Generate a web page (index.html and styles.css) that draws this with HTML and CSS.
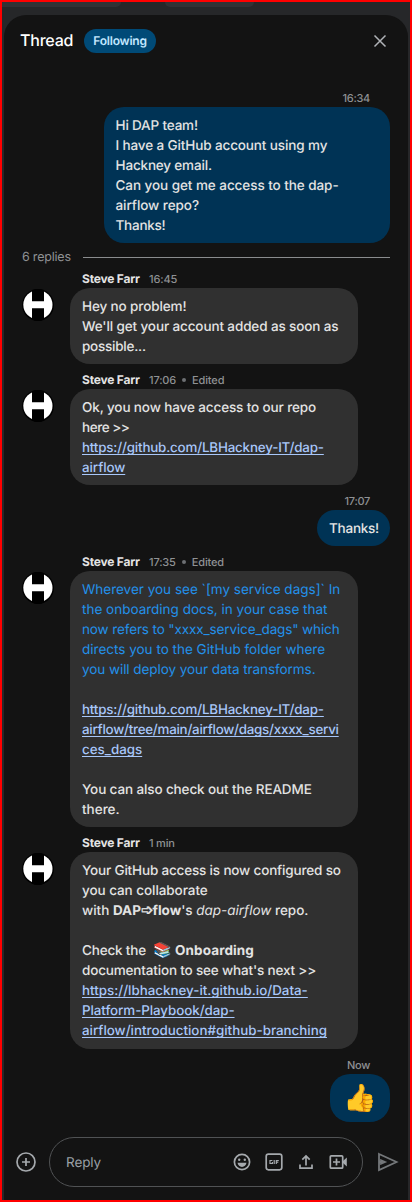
FILE: index.html
```html
<!DOCTYPE html>
<html lang="en">
<head>
<meta charset="utf-8">
<title>Thread</title>
<link rel="stylesheet" href="styles.css">
</head>
<body>
<svg class="defs" aria-hidden="true">
  <symbol id="avatar" viewBox="0 0 32 32">
    <circle cx="16" cy="16" r="16" fill="#000"/>
    <circle cx="15.900" cy="15.800" r="14.600" fill="#fff"/>
    <path fill="#000" d="M10 1Q16-1 22 1V12.200H10zM10 19.200h12v11.300q-6 2.500-12 0z"/>
  </symbol>
</svg>
<div class="frame">
  <div class="backdrop"><i class="chip chip-a"></i><i class="chip chip-b"></i></div>
  <main class="panel">
    <header class="head">
      <h1 class="title">Thread</h1>
      <span class="following">Following</span>
      <svg class="close" viewBox="0 0 14 14"><path d="M1.500 1.500l11 11M12.500 1.500l-11 11"/></svg>
    </header>

    <section class="thread">
      <article class="mine">
        <div class="meta mine-meta">16:34</div>
        <div class="bubble blue wide">
          <span class="ln t3">Hi DAP team!</span>
          <span class="ln t2">I have a GitHub account using my</span>
          <span class="ln t3">Hackney email.</span>
          <span class="ln t1">Can you get me access to the dap-</span>
          <span class="ln t1">airflow repo?</span>
          <span class="ln t4">Thanks!</span>
        </div>
      </article>

      <div class="replies"><span>6 replies</span><hr></div>

      <article class="theirs">
        <svg class="avatar"><use href="#avatar"/></svg>
        <div class="body">
          <div class="meta"><b>Steve Farr</b><span>16:45</span></div>
          <div class="bubble">
            <span class="ln t2">Hey no problem!</span>
            <span class="ln t2">We'll get your account added as soon as</span>
            <span class="ln t4">possible...</span>
          </div>
        </div>
      </article>

      <article class="theirs">
        <svg class="avatar"><use href="#avatar"/></svg>
        <div class="body">
          <div class="meta"><b>Steve Farr</b><span>17:06</span><i class="dot"></i><span>Edited</span></div>
          <div class="bubble">
            <span class="ln t2">Ok, you now have access to our repo</span>
            <span class="ln t5">here &gt;&gt;</span>
            <a class="ln t3">https://github.com/LBHackney-IT/dap-</a>
            <a class="ln t1">airflow</a>
          </div>
        </div>
      </article>

      <article class="mine">
        <div class="meta mine-meta">17:07</div>
        <div class="bubble blue thanks"><span class="ln t4">Thanks!</span></div>
      </article>

      <article class="theirs">
        <svg class="avatar"><use href="#avatar"/></svg>
        <div class="body">
          <div class="meta"><b>Steve Farr</b><span>17:35</span><i class="dot"></i><span>Edited</span></div>
          <div class="bubble">
            <div class="note">
              <span class="ln">Wherever you see `[my service dags]` In</span>
              <span class="ln">the onboarding docs, in your case that</span>
              <span class="ln t2">now refers to "xxxx_service_dags" which</span>
              <span class="ln">directs you to the GitHub folder where</span>
              <span class="ln t1">you will deploy your data transforms.</span>
            </div>
            <span class="ln"></span>
            <a class="ln t3">https://github.com/LBHackney-IT/dap-</a>
            <a class="ln t4">airflow/tree/main/airflow/dags/xxxx_servi</a>
            <a class="ln">ces_dags</a>
            <span class="ln"></span>
            <span class="ln t2">You can also check out the README</span>
            <span class="ln">there.</span>
          </div>
        </div>
      </article>

      <article class="theirs">
        <svg class="avatar"><use href="#avatar"/></svg>
        <div class="body">
          <div class="meta"><b>Steve Farr</b><span class="tight">1 min</span></div>
          <div class="bubble last">
            <span class="ln t3">Your GitHub access is now configured so</span>
            <span class="ln t1">you can collaborate</span>
            <span class="ln">with <b>DAP<span class="arrow">➩</span>flow</b>'s <em>dap-airflow</em> repo.</span>
            <span class="ln"></span>
            <span class="ln t3">Check the <span class="books">📚</span><b class="onboarding">Onboarding</b></span>
            <span class="ln t3">documentation to see what's next &gt;&gt;</span>
            <a class="ln">https://lbhackney-it.github.io/Data-</a>
            <a class="ln t1">Platform-Playbook/dap-</a>
            <a class="ln">airflow/introduction#github-branching</a>
          </div>
        </div>
      </article>

      <article class="mine">
        <div class="meta mine-meta">Now</div>
        <div class="bubble blue thumb">👍</div>
      </article>
    </section>

    <footer class="composer">
      <svg class="icon plus" viewBox="0 0 24 24"><circle cx="12" cy="12" r="9"/><path d="M12 8v8M8 12h8"/></svg>
      <div class="field">
        <span class="placeholder">Reply</span>
        <svg class="icon" viewBox="0 0 24 24"><circle cx="12" cy="12" r="7.600"/><path class="fill" d="M7.500 12.800h9c-.5 2.600-2.200 4.100-4.500 4.100s-4-1.500-4.500-4.100z"/><circle class="fill" cx="9.200" cy="9.800" r="1.200"/><circle class="fill" cx="14.800" cy="9.800" r="1.200"/></svg>
        <svg class="icon" viewBox="0 0 24 24"><rect x="4.200" y="4.200" width="15.600" height="15.600" rx="2.200"/><path class="thin" d="M10.400 10.500H8v3h2.400V12M12.200 10v4M14.300 14v-3.500h2.500M14.300 12.200h2"/></svg>
        <svg class="icon" viewBox="0 0 24 24"><path d="M12 15.500V6.500M8.300 9.700L12 6l3.700 3.700M6 14.500v3.700h12v-3.700"/></svg>
        <svg class="icon" viewBox="0 0 24 24"><rect x="4.300" y="5.800" width="12.400" height="12.400" rx="1"/><path d="M10.500 8.500v7M7 12h7"/><path class="fill" d="M17 11l3.800-3.500v9L17 13z"/></svg>
      </div>
      <svg class="send" viewBox="0 0 22 20"><path d="M2 2l17.500 8L2 18zM2 10h6M3 7.800L8 10l-5 2.200"/></svg>
    </footer>
  </main>
</div>
</body>
</html>
```
FILE: styles.css
```css
* { box-sizing: border-box; }
body {
  margin: 0;
  font-family: Inter, "DejaVu Sans", "Noto Color Emoji", sans-serif;
  text-rendering: geometricPrecision;
}
.defs { display: none; }
.frame {
  height: 1202px;
  display: flex;
  flex-direction: column;
  border: 2px solid #f00;
  background: #262729;
  overflow: hidden;
}
.backdrop {
  height: 13px;
  flex: none;
  display: flex;
  align-items: flex-start;
  gap: 44px;
}
.chip { height: 5px; background: #313235; }
.chip-a { width: 119px; border-radius: 0 0 12px 0; }
.chip-b { width: 89px; border-radius: 0 0 12px 12px; }
.panel {
  flex: 1;
  display: flex;
  flex-direction: column;
  margin: 0 2px;
  border-radius: 22px 22px 0 0;
  background: #131313;
}
.head {
  display: flex;
  align-items: center;
  height: 52px;
  padding: 0 21px 0 16px;
}
.title {
  width: 64px;
  margin: 0;
  font-size: 16px;
  font-weight: 500;
  line-height: 22px;
  padding-bottom: 2px;
  letter-spacing: -.2px;
  color: #fff;
}
.following {
  width: 72px;
  height: 24px;
  border-radius: 12px;
  background: #004a77;
  color: #c2e7ff;
  font-size: 12px;
  font-weight: 600;
  line-height: 24px;
  letter-spacing: -.22px;
  text-align: center;
}
.close { width: 14px; height: 14px; margin-left: auto; fill: none; stroke: #b0b3b7; stroke-width: 1.500; }

.thread { padding: 15px 18px 0 14px; }
.meta {
  height: 25px;
  padding: 8px 0 1px 12px;
  display: flex;
  align-items: center;
  color: #8f9193;
  font-size: 11px;
  font-weight: 500;
  line-height: 16px;
  letter-spacing: -.15px;
}
.meta b { width: 67px; font-size: 12px; font-weight: 700; letter-spacing: -.2px; color: #e3e3e3; white-space: nowrap; }
.dot { width: 4px; height: 4px; margin: 0 6px; border-radius: 50%; background: #6d7073; }
.tight { letter-spacing: -.2px; }
.mine { display: flex; flex-direction: column; align-items: flex-end; }
.mine-meta { padding-right: 20px; letter-spacing: -.3px; }
.bubble {
  width: 288px;
  padding: 9px 12px 7px;
  border-radius: 20px;
  background: #303030;
  color: #e3e3e3;
  font-size: 13.5px;
  font-weight: 450;
  line-height: 20px;
}
.last { padding-bottom: 8px; }
.blue { background: #003355; }
.wide { width: 286px; padding-left: 11.500px; }
.thanks { width: 73px; border-radius: 18px; }
.thumb { width: 60px; height: 48px; padding: 0; font-size: 27px; line-height: 48px; text-align: center; }
.ln { display: block; height: 20px; white-space: nowrap; }
.t1 { letter-spacing: -.06px; }
.t2 { letter-spacing: -.12px; }
.t3 { letter-spacing: -.17px; }
.t4 { letter-spacing: -.24px; }
.t5 { letter-spacing: -.46px; }
a.ln { width: fit-content; font-size: 13.350px; color: #a8c7fa; text-decoration: underline; text-underline-offset: 2px; text-decoration-skip-ink: none; text-decoration-thickness: 1px; }
.note { color: #2390ea; font-weight: 400; }
.arrow { font-size: 15px; font-family: "DejaVu Sans", sans-serif; line-height: 1; letter-spacing: -1px; -webkit-text-stroke: .4px #e3e3e3; }
.books { margin: 0 3px 0 4px; font-size: 15px; line-height: 1; }
.onboarding { letter-spacing: .12px; }
.replies {
  display: flex;
  align-items: center;
  height: 20px;
  margin-top: 4px;
  padding-left: 4px;
  color: #8f9193;
  font-size: 12.500px;
  letter-spacing: -.2px;
  line-height: 20px;
}
.replies span { width: 61px; padding-top: 1px; white-space: nowrap; }
.replies hr { flex: 1; height: 1px; margin: 0; border: 0; background: #8a8c8e; }
.replies + .theirs { margin-top: -4px; }
.theirs { display: flex; padding-left: 4px; }
.avatar { width: 32px; height: 32px; margin: 26px 16px 0 0; flex: none; }

.composer { display: flex; align-items: center; height: 50px; margin-top: 15px; padding-left: 10px; }
.icon { flex: none; width: 24px; height: 24px; fill: none; stroke: #a5a9ad; stroke-width: 1.700; }
.icon .fill { fill: #a5a9ad; stroke: none; }
.icon .thin { stroke-width: 1.200; }
.field {
  display: flex;
  align-items: center;
  gap: 8px;
  width: 314px;
  height: 50px;
  margin: 0 14px 0 11px;
  padding: 0 12px 0 16px;
  border: 1px solid #505254;
  border-radius: 25px;
}
.placeholder { flex: 1; padding-top: 2px; color: #9aa0a6; font-size: 13.500px; letter-spacing: -.1px; }
.send { width: 22px; height: 20px; fill: none; stroke: #74777a; stroke-width: 1.800; }
```
